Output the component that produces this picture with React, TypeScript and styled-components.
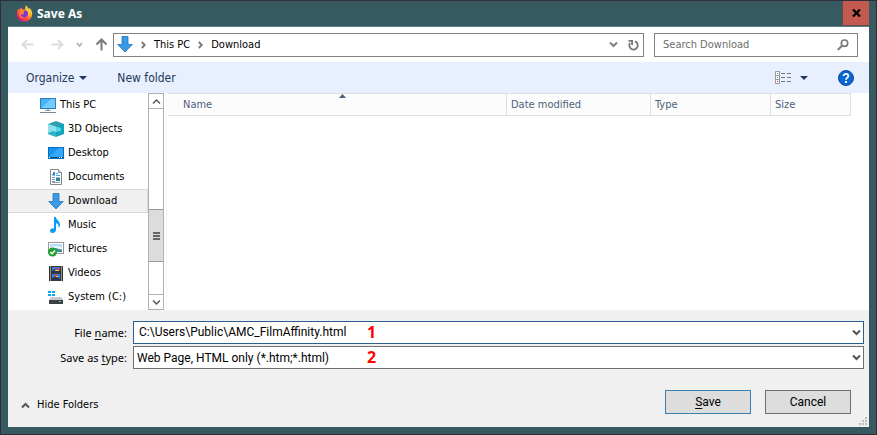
import React from "react";
import styled, { createGlobalStyle, css } from "styled-components";

const SHELL_FONT = `"DejaVu Sans Condensed", "Noto Sans", sans-serif`;
const FORM_FONT = `Roboto, "Noto Sans", sans-serif`;
const LABEL_FONT = `"Noto Sans", "Open Sans", sans-serif`;

const GlobalStyle = createGlobalStyle`
  *, *::before, *::after { box-sizing: border-box; }
  body { margin: 0; background: #375a61; }
  button, input, select { font: inherit; color: inherit; margin: 0; }
  button { padding: 0; border: 0; background: none; }
  svg { display: block; flex: none; }
  ul { list-style: none; margin: 0; padding: 0; }
`;

const Window = styled.div`
  display: flex;
  flex-direction: column;
  min-height: 100vh;
  padding: 0 7px 7px;
  border: 1px solid #2f2f38;
  background: #375a61;
  color: #000;
  font: 11px/16px ${SHELL_FONT};
`;

const TitleBar = styled.header`
  display: flex;
  align-items: center;
  height: 26px;
  padding-left: 8px;
  gap: 4px;
  border-bottom: 1px solid #5c8087;
`;

const Title = styled.h1`
  flex: 1;
  margin: 0;
  color: #fff;
  font: 700 12px/16px ${LABEL_FONT};
`;

const CloseButton = styled.button`
  display: grid;
  place-items: center;
  align-self: stretch;
  width: 27px;
  background: #c25a50;
  border: solid #5e4a4c;
  border-width: 0 0 1px 1px;
`;

const Client = styled.main`
  flex: 1;
  display: flex;
  flex-direction: column;
  background: #fff;
`;

const NavBar = styled.nav`
  display: flex;
  align-items: center;
  height: 35px;
  padding: 0 11px 0 13px;
`;

const NavButtons = styled.div`
  display: flex;
  align-items: center;
  gap: 12px;
  width: 92px;
`;

const HistoryButtons = styled.div`
  display: flex;
  align-items: center;
  gap: 17px;
`;

const IconButton = styled.button`
  display: grid;
  place-items: center;
`;

const AddressBar = styled.div`
  flex: 1;
  display: flex;
  align-items: center;
  height: 24px;
  padding: 0 4px 0 3px;
  border: 1px solid #828282;
`;

const Crumb = styled.button`
  display: flex;
  align-items: center;
  gap: 8px;
  margin-left: 8px;
`;

const AddressTools = styled.div`
  display: flex;
  align-items: center;
  gap: 10px;
  margin-left: auto;
`;

const SearchBox = styled.label`
  display: flex;
  align-items: center;
  width: 204px;
  height: 24px;
  margin-left: 10px;
  padding: 0 8px;
  border: 1px solid #828282;
`;

const SearchInput = styled.input`
  flex: 1;
  min-width: 0;
  padding: 0;
  border: 0;
  outline: 0;
  background: none;
  &::placeholder { color: #6d6d6d; opacity: 1; }
`;

const CommandBar = styled.div`
  display: flex;
  align-items: center;
  height: 31px;
  padding: 0 15px 0 18px;
  background: #e8effe;
  color: #1e395b;
  font-size: 12px;
`;

const Command = styled.button`
  display: flex;
  align-items: center;
  gap: 5px;
  margin-right: 30px;
`;

const CommandTools = styled.div`
  display: flex;
  align-items: center;
  gap: 30px;
  margin-left: auto;
`;

const ViewButton = styled.button`
  display: flex;
  align-items: center;
  gap: 9px;
`;

const Body = styled.div`
  flex: 1;
  display: flex;
  min-height: 217px;
`;

const Tree = styled.ul`
  width: 140px;
  height: 217px;
  overflow: hidden;
`;

const TreeItem = styled.li<{ $root?: boolean; $selected?: boolean }>`
  display: flex;
  align-items: center;
  gap: 4px;
  height: 24px;
  padding-left: ${(p) => (p.$root ? 32 : 40)}px;
  border: 1px solid transparent;
  border-left: 0;
  ${(p) =>
    p.$selected &&
    css`
      background: #f0f0f0;
      border-color: #d9d9d9;
    `}
`;

const ScrollBar = styled.div`
  display: flex;
  flex-direction: column;
  width: 16px;
  border: 1px solid #b0b0b0;
`;

const ScrollArrow = styled.button<{ $end?: boolean }>`
  display: grid;
  place-items: center;
  height: 15px;
  border-bottom: ${(p) => (p.$end ? 0 : 1)}px solid #b0b0b0;
  border-top: ${(p) => (p.$end ? 1 : 0)}px solid #b0b0b0;
`;

const ScrollTrack = styled.div`
  flex: 1;
  display: flex;
  flex-direction: column;
  justify-content: flex-end;
  padding-bottom: 32px;
`;

const ScrollThumb = styled.div`
  display: grid;
  place-items: center;
  height: 53px;
  border: solid #999;
  border-width: 1px 0;
  background: #dcdcdc;
`;

const FilePane = styled.section`
  flex: 1;
  margin-left: 2px;
  padding: 0 18px 0 1px;
  border-left: 1px solid #f3f3f3;
`;

const FileTable = styled.table`
  width: 100%;
  table-layout: fixed;
  border-collapse: separate;
  border-spacing: 0;
  border-top: 1px solid #e0e0e0;
  color: #4c607a;
`;

const ColumnHead = styled.th<{ $width?: number }>`
  position: relative;
  width: ${(p) => (p.$width ? `${p.$width}px` : "auto")};
  height: 22px;
  padding: 0 0 0 ${(p) => (p.$width ? 4 : 15)}px;
  border: solid #e0e0e0;
  border-width: 0 1px 1px 0;
  background: #fcfcfc;
  font-weight: 400;
  text-align: left;
`;

const SortMark = styled.span`
  position: absolute;
  inset: 0 0 auto 10px;
  display: flex;
  justify-content: center;
`;

const Footer = styled.form`
  display: flex;
  flex-direction: column;
  padding: 11px 5px 0 0;
  background: #f0f0f0;
  font: 12px/16px ${FORM_FONT};
`;

const FieldRow = styled.div`
  display: flex;
  align-items: center;
  margin-bottom: 2px;
`;

const FieldLabel = styled.label`
  width: 125px;
  padding-right: 6px;
  text-align: right;
  font: 11px/16px ${LABEL_FONT};
`;

const Combo = styled.div<{ $focused?: boolean }>`
  position: relative;
  flex: 1;
  display: flex;
  align-items: center;
  height: 23px;
  padding-right: 2px;
  border: 1px solid ${(p) => (p.$focused ? "#2a5f8f" : "#707070")};
  background: #fff;
`;

const controlReset = css`
  flex: 1;
  min-width: 0;
  height: 20px;
  border: 0;
  outline: 0;
  background: none;
  appearance: none;
  line-height: 18px;
`;

const NameInput = styled.input`
  ${controlReset}
  padding: 0 0 2px 5px;
`;

const TypeSelect = styled.select`
  ${controlReset}
  padding: 0 0 0 3px;
`;

const Marker = styled.span`
  position: absolute;
  left: 233px;
  top: 1px;
  color: #f00;
  font: 700 16px/18px ${LABEL_FONT};
`;

const Actions = styled.div`
  display: flex;
  align-items: center;
  gap: 14px;
  margin-top: 19px;
  padding: 0 13px 0 13px;
`;

const FoldersToggle = styled.button`
  display: flex;
  align-items: center;
  gap: 7px;
  margin: 6px auto 0 0;
  font: 11px/16px ${SHELL_FONT};
`;

const PushButton = styled.button<{ $primary?: boolean }>`
  width: 86px;
  height: 24px;
  border: 1px solid ${(p) => (p.$primary ? "#3c7fb1" : "#707070")};
  background: #ddd;
`;

const GripRow = styled.div`
  display: flex;
  justify-content: flex-end;
  align-items: flex-end;
  height: 13px;
  padding-bottom: 2px;
  margin-right: -3px;
`;

const Access = styled.u`
  text-underline-offset: 2px;
`;

const FirefoxIcon = () => (
  <svg width="17" height="17" viewBox="0 0 17 17" aria-hidden="true">
    <defs>
      <linearGradient id="fx" x1="0.85" y1="0.1" x2="0.2" y2="0.9">
        <stop offset="0" stopColor="#fff04a" />
        <stop offset="0.4" stopColor="#ff9a2a" />
        <stop offset="0.7" stopColor="#ff4548" />
        <stop offset="1" stopColor="#e4187c" />
      </linearGradient>
    </defs>
    <path
      d="M9.6 0.3C11 1.3 12.2 2.6 12.7 4.2C13.2 3.9 13.4 3.4 13.5 3C15.4 4.8 16.3 6.8 16.2 9.1C16 13.4 12.7 16.6 8.5 16.6C4.2 16.6 0.8 13.2 0.8 8.9C0.8 6.7 1.6 4.8 2.7 3.5C2.8 4 3 4.4 3.3 4.7C4 3.7 4.8 3 5.6 2.7C5.6 3.4 5.9 4 6.4 4.4L8.6 4.6C9.5 3.5 9.8 1.8 9.6 0.3Z"
      fill="url(#fx)"
    />
    <circle cx="8.4" cy="8.6" r="3.6" fill="#7b35d6" />
    <path d="M5.2 5.6C6.5 4.8 8.3 5 9.3 5.8L7.7 7C7 7.4 7.4 8.2 8.4 8.5C7.6 9.8 5.7 9.7 4.8 8.6C4.2 11.4 6.3 12.8 8.6 12.7C5.3 14 3 11.8 3.1 9C3.2 7.5 4 6.3 5.2 5.6Z" fill="#ff862e" />
    <path d="M10 5.2C12.8 6.3 13.3 9.6 11.4 11.6C14.5 10.7 14.8 6.8 12.7 4.2C12 3.1 10.9 2 9.8 1.6Z" fill="#ffc53a" />
  </svg>
);

const NavArrow = ({ dir, color }: { dir: "left" | "right" | "up"; color: string }) => (
  <svg width="13" height="13" viewBox="0 0 13 13" aria-hidden="true" fill="none" stroke={color} strokeWidth="2">
    {dir === "left" && <path d="M12.5 6.5H1.5M6 2L1.5 6.5L6 11" />}
    {dir === "right" && <path d="M0.5 6.5H11.5M7 2L11.5 6.5L7 11" />}
    {dir === "up" && <path d="M6.5 12.5V1.5M1.5 6.5L6.5 1.5L11.5 6.5" />}
  </svg>
);

type ChevronProps = { d: string; color?: string; w?: number; h?: number; stroke?: number };

const Chevron = ({ d, color = "#555", w = 9, h = 7, stroke = 2 }: ChevronProps) => (
  <svg width={w} height={h} viewBox={`0 0 ${w} ${h}`} aria-hidden="true">
    <path d={d} fill="none" stroke={color} strokeWidth={stroke} />
  </svg>
);

const DOWN = "M1 1.5L4.5 5L8 1.5";
const UP = "M1 5.5L4.5 2L8 5.5";
const CrumbSep = () => <Chevron w={5} h={8} d="M0.8 1L3.8 4L0.8 7" color="#777" stroke={1.8} />;

const MenuTriangle = () => (
  <svg width="8" height="4" viewBox="0 0 8 4" aria-hidden="true">
    <path d="M0 0H8L4 4Z" fill="#1e395b" />
  </svg>
);

const DownloadIcon = () => (
  <svg width="16" height="17" viewBox="0 0 16 17" aria-hidden="true">
    <path d="M5 0.5H11V8.5H15.3L8 16L0.7 8.5H5Z" fill="#3a9ae8" stroke="#2377bd" strokeWidth="0.8" />
  </svg>
);

const PcIcon = () => (
  <svg width="16" height="16" viewBox="0 0 16 16" aria-hidden="true">
    <rect x="0.5" y="1.5" width="15" height="10" fill="#43b5f4" stroke="#2b81b8" />
    <path d="M1 11L11 2H15V11Z" fill="#72cbfb" />
    <path d="M7 12H9V13H11V14H5V13H7Z" fill="#8cabc0" />
    <path d="M0 15.5H16" stroke="#70899b" />
  </svg>
);

const CubeIcon = () => (
  <svg width="16" height="16" viewBox="0 0 16 16" aria-hidden="true">
    <path d="M8 0L16 3V5L8 7L0 5V3Z" fill="#2f9fb4" />
    <path d="M0 3L8 5.5V16L0 13Z" fill="#8fe0e8" />
    <path d="M8 5.5L16 3V13L8 16Z" fill="#12a3bd" />
    <path d="M0 12L5 10L8 11V16L0 13Z" fill="#2fb3c4" />
    <path d="M8 5.5L13 7V10L8 11Z" fill="#4fd8e6" />
  </svg>
);

const DesktopIcon = () => (
  <svg width="16" height="12" viewBox="0 0 16 12" aria-hidden="true">
    <rect x="0.5" y="0.5" width="15" height="11" fill="#1593ee" stroke="#076dbb" />
    <path d="M1 10L11 1H15V10Z" fill="#35a7fb" />
    <path d="M1 10.5H15" stroke="#075386" />
    <path d="M1 10.5H2M11 10.5H12M13 10.5H14" stroke="#fff" />
  </svg>
);

const DocumentIcon = () => (
  <svg width="16" height="16" viewBox="0 0 16 16" aria-hidden="true">
    <path d="M2.5 0.5H10.5L13.5 3.5V15.5H2.5Z" fill="#fff" stroke="#868686" />
    <path d="M10.5 0.5V3.5H13.5" fill="#eee" stroke="#868686" />
    <path d="M4 6.5L5.5 3H7V6.5Z" fill="#2581c4" />
    <path d="M8 4.5H10M8 6.5H12M4 8.5H7M4 12.5H7" stroke="#56a2d4" />
    <path d="M4 10.5H7M4 13.5H12" stroke="#999" />
    <path d="M8 8H12V12H8Z" fill="#2d809f" />
    <path d="M8 8H12V9H8Z" fill="#8cc7ee" />
  </svg>
);

const MusicIcon = () => (
  <svg width="16" height="16" viewBox="0 0 16 16" aria-hidden="true">
    <path d="M6 0H8C8.3 3.5 12.5 4 12 8.5C11.8 9.8 11 10.6 10.5 11C11.2 8.5 10 6.6 8 6V12.5C8 14.5 6.5 16 4.5 16C2.8 16 2 15 2 13.8C2 12 4 10.8 6 11.4Z" fill="#079cf5" />
  </svg>
);

const PicturesIcon = () => (
  <svg width="16" height="16" viewBox="0 0 16 16" aria-hidden="true">
    <rect x="0.5" y="1.5" width="15" height="11" fill="#fff" stroke="#999" />
    <rect x="2" y="3" width="12" height="8" fill="#b6dcfa" />
    <path d="M2 6L8 5L14 6V8H2Z" fill="#eef9ff" />
    <path d="M2 8L8 7L14 9V11H2Z" fill="#3f8c9b" />
    <circle cx="4.5" cy="11" r="4.5" fill="#21a02d" />
    <path d="M2.2 11L4 12.8L7 9.5" fill="none" stroke="#fff" strokeWidth="1.4" />
  </svg>
);

const VideoIcon = () => (
  <svg width="16" height="16" viewBox="0 0 16 16" aria-hidden="true">
    <rect x="1" y="1" width="14" height="15" fill="#353535" />
    <path d="M2.5 1.5V16M13.5 1.5V16" stroke="#e8e8e8" strokeDasharray="1 1" />
    <path d="M4 2H12V8H4ZM4 9H12V15H4Z" fill="#3c7be0" />
    <path d="M4 6L7 4L9 6L12 5V8H4ZM4 13L8 11L12 14V15H4Z" fill="#263951" />
    <path d="M8 3H11V5H8ZM6 10H8V12H6Z" fill="#d8403a" />
    <path d="M7 5H11V6H7ZM8 11H10V12H8Z" fill="#f5c542" />
  </svg>
);

const DriveIcon = () => (
  <svg width="16" height="16" viewBox="0 0 16 16" aria-hidden="true">
    <path d="M0 2H3V4H0ZM4 2H7V4H4ZM0 5H3V7H0ZM4 5H7V7H4Z" fill="#08a9ee" />
    <path d="M3 8H13L15 11H1Z" fill="#c5c9cd" />
    <rect x="1" y="11" width="14" height="4" fill="#3d4043" />
    <rect x="11" y="12" width="2" height="1" fill="#39e34b" />
  </svg>
);

const TREE = [
  { name: "This PC", Icon: PcIcon, root: true },
  { name: "3D Objects", Icon: CubeIcon },
  { name: "Desktop", Icon: DesktopIcon },
  { name: "Documents", Icon: DocumentIcon },
  { name: "Download", Icon: DownloadIcon, selected: true },
  { name: "Music", Icon: MusicIcon },
  { name: "Pictures", Icon: PicturesIcon },
  { name: "Videos", Icon: VideoIcon },
  { name: "System (C:)", Icon: DriveIcon },
];

export default function App() {
  return (
    <>
      <GlobalStyle />
      <Window>
        <TitleBar>
          <FirefoxIcon />
          <Title>Save As</Title>
          <CloseButton aria-label="Close">
            <svg width="9" height="8" viewBox="0 0 9 8" aria-hidden="true">
              <path d="M1 0.5L8 7.5M8 0.5L1 7.5" stroke="#000" strokeWidth="2.2" />
            </svg>
          </CloseButton>
        </TitleBar>
        <Client>
          <NavBar>
            <NavButtons>
              <HistoryButtons>
                <IconButton aria-label="Back"><NavArrow dir="left" color="#dcdcdc" /></IconButton>
                <IconButton aria-label="Forward"><NavArrow dir="right" color="#dcdcdc" /></IconButton>
              </HistoryButtons>
              <IconButton aria-label="Recent locations">
                <Chevron w={7} h={6} d="M1 1L3.5 4L6 1" color="#b5b5b5" stroke={1.8} />
              </IconButton>
              <IconButton aria-label="Up"><NavArrow dir="up" color="#7a7a7a" /></IconButton>
            </NavButtons>
            <AddressBar>
              <DownloadIcon />
              <Crumb><CrumbSep />This PC</Crumb>
              <Crumb><CrumbSep />Download</Crumb>
              <AddressTools>
                <IconButton aria-label="Previous locations"><Chevron d={DOWN} color="#808080" /></IconButton>
                <IconButton aria-label="Refresh">
                  <svg width="11" height="12" viewBox="0 0 11 12" aria-hidden="true" fill="none" stroke="#777" strokeWidth="1.8">
                    <path d="M7 2.4A4.2 4.2 0 1 1 2 4" />
                    <path d="M0.5 1.9H4.1V6" />
                  </svg>
                </IconButton>
              </AddressTools>
            </AddressBar>
            <SearchBox>
              <SearchInput placeholder="Search Download" aria-label="Search Download" />
              <svg width="12" height="12" viewBox="0 0 12 12" aria-hidden="true" fill="none" stroke="#777">
                <circle cx="7.5" cy="4.2" r="3.2" strokeWidth="1.6" />
                <path d="M5 6.7L0.8 10.9" strokeWidth="2" />
              </svg>
            </SearchBox>
          </NavBar>
          <CommandBar>
            <Command>Organize<MenuTriangle /></Command>
            <Command>New folder</Command>
            <CommandTools>
              <ViewButton aria-label="Change your view">
                <svg width="16" height="13" viewBox="0 0 16 13" aria-hidden="true">
                  <path d="M0.5 0.5H4.5V12.5H0.5ZM0.5 4.5H4.5M0.5 8.5H4.5" fill="#fff" stroke="#999" />
                  <path d="M2 2.5H3M2 6.5H3" stroke="#4a78b0" />
                  <path d="M2 10.5H3" stroke="#d22" />
                  <path d="M6 2.5H10M12 2.5H16M6 6.5H10M12 6.5H16M6 10.5H10M12 10.5H16" stroke="#777" />
                </svg>
                <MenuTriangle />
              </ViewButton>
              <IconButton aria-label="Help">
                <svg width="16" height="16" viewBox="0 0 16 16" aria-hidden="true">
                  <circle cx="8" cy="8" r="7.5" fill="#0b67cf" stroke="#0a4f9c" />
                  <path d="M5.6 5.9C5.6 3.2 10.6 3.2 10.4 6C10.3 7.6 8 7.7 8 9.7" fill="none" stroke="#fff" strokeWidth="1.8" />
                  <rect x="7" y="11" width="2" height="2" fill="#fff" />
                </svg>
              </IconButton>
            </CommandTools>
          </CommandBar>
          <Body>
            <Tree>
              {TREE.map(({ name, Icon, root, selected }) => (
                <TreeItem key={name} $root={root} $selected={selected}>
                  <Icon />
                  {name}
                </TreeItem>
              ))}
            </Tree>
            <ScrollBar>
              <ScrollArrow aria-label="Scroll up"><Chevron d={UP} stroke={1.4} /></ScrollArrow>
              <ScrollTrack>
                <ScrollThumb>
                  <svg width="7" height="8" viewBox="0 0 7 8" aria-hidden="true">
                    <path d="M0 1H7M0 4H7M0 7H7" stroke="#666" strokeWidth="2" />
                  </svg>
                </ScrollThumb>
              </ScrollTrack>
              <ScrollArrow $end aria-label="Scroll down"><Chevron d={DOWN} stroke={1.4} /></ScrollArrow>
            </ScrollBar>
            <FilePane>
              <FileTable>
                <thead>
                  <tr>
                    <ColumnHead aria-sort="ascending">
                      Name
                      <SortMark>
                        <svg width="7" height="4" viewBox="0 0 7 4" aria-hidden="true"><path d="M0 4H7L3.5 0Z" fill="#4c607a" /></svg>
                      </SortMark>
                    </ColumnHead>
                    <ColumnHead $width={144}>Date modified</ColumnHead>
                    <ColumnHead $width={120}>Type</ColumnHead>
                    <ColumnHead $width={80}>Size</ColumnHead>
                  </tr>
                </thead>
              </FileTable>
            </FilePane>
          </Body>
          <Footer onSubmit={(e) => e.preventDefault()}>
            <FieldRow>
              <FieldLabel htmlFor="file-name">File <Access>n</Access>ame:</FieldLabel>
              <Combo $focused>
                <NameInput id="file-name" defaultValue="C:\Users\Public\AMC_FilmAffinity.html" />
                <Marker>1</Marker>
                <IconButton type="button" aria-label="Recent names"><Chevron d={DOWN} /></IconButton>
              </Combo>
            </FieldRow>
            <FieldRow>
              <FieldLabel htmlFor="file-type">Save as <Access>t</Access>ype:</FieldLabel>
              <Combo>
                <TypeSelect id="file-type">
                  <option>Web Page, HTML only (*.htm;*.html)</option>
                </TypeSelect>
                <Marker>2</Marker>
                <Chevron d={DOWN} />
              </Combo>
            </FieldRow>
            <Actions>
              <FoldersToggle type="button"><Chevron d={UP} />Hide Folders</FoldersToggle>
              <PushButton type="submit" $primary><Access>S</Access>ave</PushButton>
              <PushButton type="button">Cancel</PushButton>
            </Actions>
            <GripRow>
              <svg width="8" height="8" viewBox="0 0 8 8" aria-hidden="true">
                <path d="M6 0H8V2H6ZM3 3H5V5H3ZM6 3H8V5H6ZM0 6H2V8H0ZM3 6H5V8H3ZM6 6H8V8H6Z" fill="#bdbdbd" />
              </svg>
            </GripRow>
          </Footer>
        </Client>
      </Window>
    </>
  );
}
